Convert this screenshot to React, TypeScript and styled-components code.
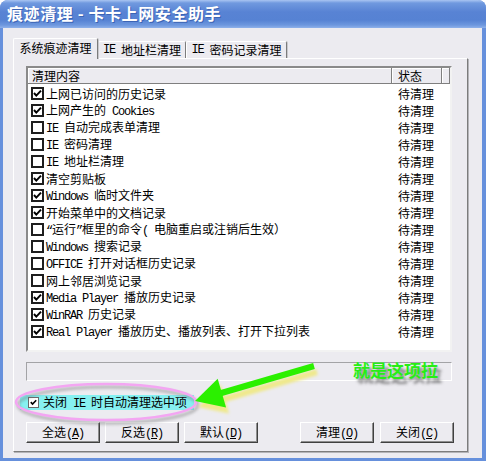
import React from 'react';
import styled, { createGlobalStyle } from 'styled-components';

const CJK = `'Noto Sans CJK SC', 'Liberation Sans', sans-serif`;

const GlobalStyle = createGlobalStyle`
  html, body {
    margin: 0;
    padding: 0;
    background: #ffffff;
  }
  body {
    font-family: ${CJK};
    font-size: 12px;
    color: #000;
  }
`;

const Window = styled.div`
  position: relative;
  width: 486px;
  height: 461px;
  display: flex;
  flex-direction: column;
  background: #6690dc;
  border-radius: 8px 8px 0 0;
  overflow: hidden;
`;

const TitleBar = styled.div`
  flex: none;
  height: 28px;
  box-sizing: border-box;
  display: flex;
  align-items: center;
  padding: 0 0 2px 7px;
  background: linear-gradient(
    #a9c5f2 0px,
    #7099df 3px,
    #5883d4 12px,
    #5682d3 20px,
    #6d97de 25px,
    #8fb1ea 28px
  );
  color: #fff;
  font: bold 16px/1 ${CJK};
  letter-spacing: 0.6px;
  text-shadow: 1px 1px 0 #3c64b4;
`;

const Client = styled.div`
  flex: 1;
  margin: 0 4px 3px 3px;
  padding: 10px 14px 6px 10px;
  background: #ecebf0;
  display: flex;
  flex-direction: column;
`;

const TabStrip = styled.div`
  display: flex;
  align-items: flex-end;
  height: 20px;
`;

const Tab = styled.div<{ $active?: boolean; $w: number }>`
  position: relative;
  z-index: ${(p) => (p.$active ? 2 : 1)};
  box-sizing: border-box;
  width: ${(p) => p.$w}px;
  height: ${(p) => (p.$active ? 21 : 17)}px;
  margin-bottom: ${(p) => (p.$active ? -1 : 0)}px;
  display: flex;
  align-items: center;
  justify-content: center;
  padding-bottom: ${(p) => (p.$active ? 3 : 0)}px;
  background: #ecebf0;
  border-top: 1px solid #fff;
  border-left: 1px solid #fff;
  border-right: 1px solid #7c7c7c;
  border-radius: 2px 2px 0 0;
  box-shadow: 1px 0 0 #c8c8cc;
  font: 12px/1 ${CJK};
  white-space: pre;
`;

const Panel = styled.div`
  flex: 1;
  display: flex;
  flex-direction: column;
  padding: 7px 13px 8px 12px;
  border: 1px solid;
  border-color: #fff #7c7c7c #7c7c7c #fff;
  box-shadow: 1px 1px 0 #b4b4b8;
`;

const ListView = styled.div`
  width: 426px;
  height: 286px;
  box-sizing: border-box;
  background: #fff;
  border: 2px solid;
  border-color: #8a8a8a #f2f2f2 #f2f2f2 #8a8a8a;
  display: flex;
  flex-direction: column;
`;

const Columns = styled.div`
  display: grid;
  grid-template-columns: 364px 50px 1fr;
`;

const HeaderRow = styled(Columns)`
  height: 16px;
`;

const HeaderCell = styled.div<{ $pad?: number }>`
  box-sizing: border-box;
  display: flex;
  align-items: center;
  padding-left: ${(p) => p.$pad ?? 4}px;
  background: #ecebf0;
  border-right: 1px solid #7f7f7f;
  border-bottom: 1px solid #7f7f7f;
  box-shadow: inset 1px 1px 0 #fff;
  font: 12px/1 ${CJK};
`;

const Rows = styled.div`
  padding-top: 1px;
`;

const Row = styled(Columns)`
  height: 17px;
  align-items: center;
`;

const ItemCell = styled.div`
  display: flex;
  align-items: center;
  gap: 2px;
  padding-left: 3px;
  font: 12px/1 ${CJK};
  white-space: pre;
`;

const StatusCell = styled.div`
  padding-left: 6px;
  font: 12px/1 ${CJK};
`;

const Latin = styled.span`
  font-family: 'Liberation Mono', monospace;
  letter-spacing: -1.2px;
`;

const Box = styled.span<{ $size: number; $soft?: boolean }>`
  flex: none;
  box-sizing: border-box;
  width: ${(p) => p.$size}px;
  height: ${(p) => p.$size}px;
  display: inline-flex;
  align-items: center;
  justify-content: center;
  background: #fff;
  border: ${(p) => (p.$soft ? '1px solid #6a6a6a' : '2px solid #1e1e1e')};
`;

const StatusBox = styled.div`
  width: 426px;
  height: 19px;
  margin-top: 10px;
  box-sizing: border-box;
  border: 1px solid;
  border-color: #a3a3a6 #fff #fff #a3a3a6;
`;

const CheckRow = styled.label`
  align-self: flex-start;
  height: 15px;
  margin: 14px 0 0 -6px;
  padding: 0 7px 0 8px;
  display: flex;
  align-items: center;
  gap: 4px;
  background: #86f0f1;
  font: 12px/1 ${CJK};
  white-space: pre;
`;

const ButtonRow = styled.div`
  margin-top: 12px;
  display: flex;
  justify-content: space-between;
`;

const ButtonGroup = styled.div<{ $gap: number }>`
  display: flex;
  gap: ${(p) => p.$gap}px;
`;

const Button = styled.button`
  width: 74px;
  height: 21px;
  padding: 0;
  background: #ecebf0;
  border: 1px solid;
  border-color: #fff #404040 #404040 #fff;
  box-shadow: inset -1px -1px 0 #8e8e8e;
  font: 12px/1 ${CJK};
  color: #000;
  white-space: pre;
`;

const Overlay = styled.svg`
  position: absolute;
  left: 0;
  top: 0;
  pointer-events: none;
`;

const Note = styled.span`
  position: absolute;
  left: 353px;
  top: 361px;
  color: #27ee14;
  font: bold 17px/17px ${CJK};
  text-shadow: 4px 5px 3px rgba(60, 60, 60, 0.6);
`;

function Mixed({ text }: { text: string }) {
  const parts = text.split(/([\x20-\x7E“”]+)/).filter(Boolean);
  return (
    <>
      {parts.map((p, i) =>
        /[\x20-\x7E“”]/.test(p[0]) ? <Latin key={i}>{p}</Latin> : <React.Fragment key={i}>{p}</React.Fragment>
      )}
    </>
  );
}

function Check({ on, size = 13, soft }: { on: boolean; size?: number; soft?: boolean }) {
  return (
    <Box $size={size} $soft={soft}>
      {on && (
        <svg width={size - 4} height={size - 4} viewBox="0 0 9 9">
          <polyline points="1,4 3.3,6.6 8,1.6" fill="none" stroke="#000" strokeWidth="2" />
        </svg>
      )}
    </Box>
  );
}

const items: [string, boolean][] = [
  ['上网已访问的历史记录', true],
  ['上网产生的 Cookies', true],
  ['IE 自动完成表单清理', false],
  ['IE 密码清理', false],
  ['IE 地址栏清理', false],
  ['清空剪贴板', true],
  ['Windows 临时文件夹', true],
  ['开始菜单中的文档记录', true],
  ['“运行”框里的命令( 电脑重启或注销后生效）', false],
  ['Windows 搜索记录', false],
  ['OFFICE 打开对话框历史记录', false],
  ['网上邻居浏览记录', false],
  ['Media Player 播放历史记录', true],
  ['WinRAR 历史记录', true],
  ['Real Player 播放历史、播放列表、打开下拉列表', true],
];

function Btn({ label, hot }: { label: string; hot: string }) {
  return (
    <Button>
      {label}
      <Latin>
        (<u>{hot}</u>)
      </Latin>
    </Button>
  );
}

export default function App() {
  return (
    <>
      <GlobalStyle />
      <Window>
        <TitleBar>痕迹清理 - 卡卡上网安全助手</TitleBar>
        <Client>
          <TabStrip>
            <Tab $active $w={85}>系统痕迹清理</Tab>
            <Tab $w={88}>
              <Mixed text="IE 地址栏清理" />
            </Tab>
            <Tab $w={101}>
              <Mixed text="IE 密码记录清理" />
            </Tab>
          </TabStrip>
          <Panel>
            <ListView>
              <HeaderRow>
                <HeaderCell>清理内容</HeaderCell>
                <HeaderCell $pad={6}>状态</HeaderCell>
                <HeaderCell />
              </HeaderRow>
              <Rows>
                {items.map(([text, on]) => (
                  <Row key={text}>
                    <ItemCell>
                      <Check on={on} />
                      <span>
                        <Mixed text={text} />
                      </span>
                    </ItemCell>
                    <StatusCell>待清理</StatusCell>
                  </Row>
                ))}
              </Rows>
            </ListView>
            <StatusBox />
            <CheckRow>
              <Check on size={11} soft />
              <span>
                <Mixed text="关闭 IE 时自动清理选中项" />
              </span>
            </CheckRow>
            <ButtonRow>
              <ButtonGroup $gap={5}>
                <Btn label="全选" hot="A" />
                <Btn label="反选" hot="R" />
                <Btn label="默认" hot="D" />
              </ButtonGroup>
              <ButtonGroup $gap={6}>
                <Btn label="清理" hot="O" />
                <Btn label="关闭" hot="C" />
              </ButtonGroup>
            </ButtonRow>
          </Panel>
        </Client>

        <Overlay width={486} height={461}>
          <defs>
            <filter id="soft" x="-20%" y="-50%" width="140%" height="200%">
              <feGaussianBlur stdDeviation="1.6" />
            </filter>
          </defs>
          <ellipse cx={108} cy={405} rx={90} ry={18} fill="none" stroke="#6e6e6e" strokeWidth={3} opacity={0.45} filter="url(#soft)" />
          <ellipse cx={106} cy={402} rx={90} ry={18} fill="none" stroke="#f3a6f2" strokeWidth={2.5} />
          <g transform="translate(3 6)" filter="url(#soft)" fill="#efe98c" stroke="#efe98c">
            <line x1={314} y1={366} x2={218} y2={394} strokeWidth={6} />
            <polygon points="195,401 217.7,378.7 226.1,407.5" strokeWidth={0} />
          </g>
          <line x1={314} y1={366} x2={218} y2={394} stroke="#2bf000" strokeWidth={6} />
          <polygon points="195,401 217.7,378.7 226.1,407.5" fill="#2bf000" />
        </Overlay>
        <Note>就是这项拉</Note>
      </Window>
    </>
  );
}
